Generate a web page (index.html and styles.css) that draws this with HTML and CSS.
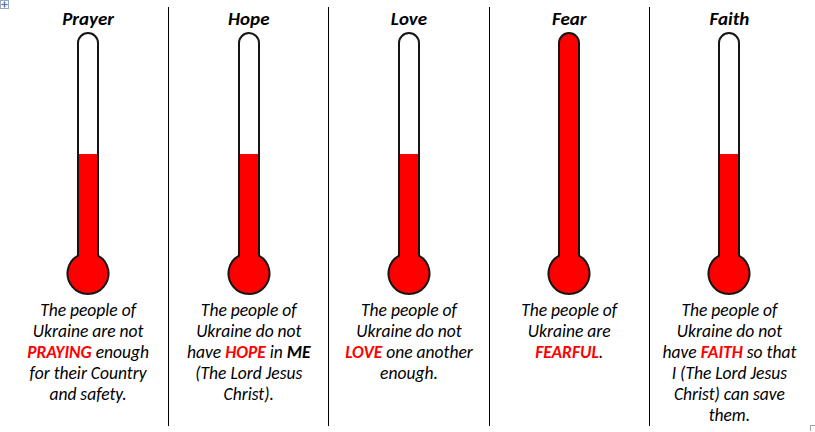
FILE: index.html
```html
<!DOCTYPE html>
<html lang="en">
<head>
<meta charset="utf-8">
<title>Thermometers</title>
<link rel="stylesheet" href="styles.css">
</head>
<body>
<div class="move-handle" aria-hidden="true">
  <svg width="9" height="9" viewBox="0 0 9 9">
    <rect x="0.5" y="0.5" width="8" height="8" fill="#fff" stroke="#9aa7c0"/>
    <path d="M4.5 1.8V7.2M1.8 4.5H7.2M3.6 2.7L4.5 1.8L5.4 2.7M3.6 6.3L4.5 7.2L5.4 6.3M2.7 3.6L1.8 4.5L2.7 5.4M6.3 3.6L7.2 4.5L6.3 5.4" fill="none" stroke="#3a5a9a" stroke-width="0.8"/>
  </svg>
</div>

<div class="page">
  <div class="board">
    <div class="col">
      <h2 class="title">Prayer</h2>
      <svg class="thermo" width="48" height="265" viewBox="0 0 48 265">
        <path class="bulb-fill" d="M14 223.6V11A10 10 0 0 1 34 11V223.6A20.5 20.5 0 1 1 14 223.6Z"/>
        <rect class="empty" x="15" y="0" width="18" height="122"/>
        <path class="outline" d="M14 223.6V11A10 10 0 0 1 34 11V223.6A20.5 20.5 0 1 1 14 223.6Z"/>
      </svg>
      <p class="caption">The people of<br>Ukraine are not<br><b class="hl">PRAYING</b> enough<br>for their Country<br>and safety.</p>
    </div>

    <div class="col">
      <h2 class="title">Hope</h2>
      <svg class="thermo" width="48" height="265" viewBox="0 0 48 265">
        <path class="bulb-fill" d="M14 223.6V11A10 10 0 0 1 34 11V223.6A20.5 20.5 0 1 1 14 223.6Z"/>
        <rect class="empty" x="15" y="0" width="18" height="122"/>
        <path class="outline" d="M14 223.6V11A10 10 0 0 1 34 11V223.6A20.5 20.5 0 1 1 14 223.6Z"/>
      </svg>
      <p class="caption">The people of<br>Ukraine do not<br>have <b class="hl">HOPE</b> in <b>ME</b><br>(The Lord Jesus<br>Christ).</p>
    </div>

    <div class="col">
      <h2 class="title">Love</h2>
      <svg class="thermo" width="48" height="265" viewBox="0 0 48 265">
        <path class="bulb-fill" d="M14 223.6V11A10 10 0 0 1 34 11V223.6A20.5 20.5 0 1 1 14 223.6Z"/>
        <rect class="empty" x="15" y="0" width="18" height="122"/>
        <path class="outline" d="M14 223.6V11A10 10 0 0 1 34 11V223.6A20.5 20.5 0 1 1 14 223.6Z"/>
      </svg>
      <p class="caption">The people of<br>Ukraine do not<br><b class="hl">LOVE</b> one another<br>enough.</p>
    </div>

    <div class="col">
      <h2 class="title">Fear</h2>
      <svg class="thermo" width="48" height="265" viewBox="0 0 48 265">
        <path class="bulb-fill" d="M14 223.6V11A10 10 0 0 1 34 11V223.6A20.5 20.5 0 1 1 14 223.6Z"/>
        <path class="outline" d="M14 223.6V11A10 10 0 0 1 34 11V223.6A20.5 20.5 0 1 1 14 223.6Z"/>
      </svg>
      <p class="caption">The people of<br>Ukraine are<br><b class="hl">FEARFUL</b>.</p>
    </div>

    <div class="col">
      <h2 class="title">Faith</h2>
      <svg class="thermo" width="48" height="265" viewBox="0 0 48 265">
        <path class="bulb-fill" d="M14 223.6V11A10 10 0 0 1 34 11V223.6A20.5 20.5 0 1 1 14 223.6Z"/>
        <rect class="empty" x="15" y="0" width="18" height="122"/>
        <path class="outline" d="M14 223.6V11A10 10 0 0 1 34 11V223.6A20.5 20.5 0 1 1 14 223.6Z"/>
      </svg>
      <p class="caption">The people of<br>Ukraine do not<br>have <b class="hl">FAITH</b> so that<br>I (The Lord Jesus<br>Christ) can save<br>them.</p>
    </div>
  </div>
</div>

<div class="corner-mark" aria-hidden="true"></div>
</body>
</html>
```

FILE: styles.css
```css
html, body {
  margin: 0;
  padding: 0;
  background: #ffffff;
}

body {
  font-family: "Carlito", "Lato", "DejaVu Sans", sans-serif;
  color: #000;
  width: 815px;
  height: 432px;
  overflow: hidden;
  position: relative;
}

.page {
  padding: 7px 6px 0 8px;
}

.board {
  display: grid;
  grid-template-columns: repeat(5, 1fr);
  width: 801px;
  height: 419px;
}

.col {
  display: flex;
  flex-direction: column;
  align-items: center;
}

.col + .col {
  border-left: 1px solid #000;
}

.title {
  margin: 1px 0 0;
  font-size: 19px;
  line-height: 22px;
  font-weight: 700;
  font-style: italic;
}

.thermo {
  display: block;
  margin-top: 2px;
}

.bulb-fill {
  fill: #ff0000;
}

.empty {
  fill: #ffffff;
}

.outline {
  fill: none;
  stroke: #151515;
  stroke-width: 2;
}

.caption {
  margin: 2.5px 0 0;
  font-size: 17.5px;
  line-height: 21px;
  font-style: italic;
  text-align: center;
  white-space: nowrap;
}

.caption b {
  font-weight: 700;
}

.hl {
  color: #ff0000;
}

.move-handle {
  position: absolute;
  left: 0;
  top: 0;
  width: 9px;
  height: 9px;
}

.move-handle svg {
  display: block;
}

.corner-mark {
  position: absolute;
  left: 810px;
  top: 425px;
  width: 5px;
  height: 5px;
  border-top: 1px solid #a0a0a0;
  border-left: 1px solid #a0a0a0;
}
```
